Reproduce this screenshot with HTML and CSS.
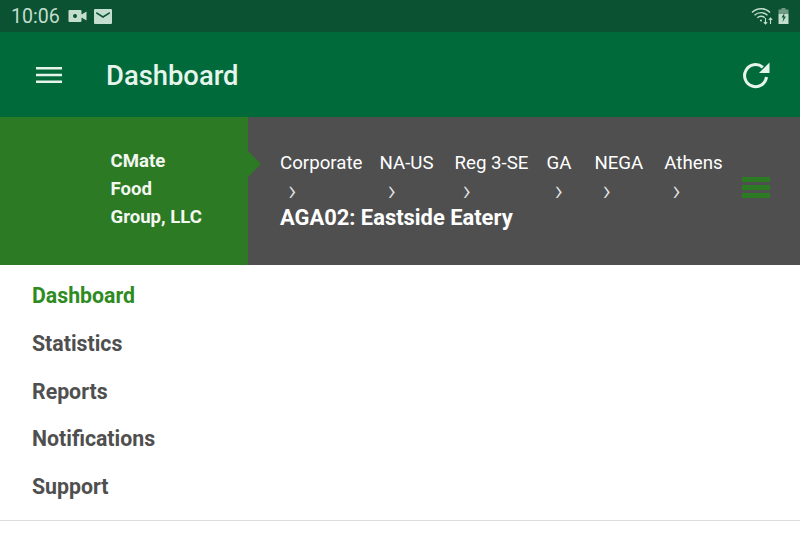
FILE: index.html
```html
<!DOCTYPE html>
<html lang="en">
<head>
    <meta charset="UTF-8">
    <meta name="viewport" content="width=device-width, initial-scale=1.0">
    <title>Dashboard</title>
    <link rel="stylesheet" href="styles.css">
</head>
<body>
    <div class="status-bar">
        <div class="status-left">
            <span class="clock">10:06</span>
            <svg class="status-icon" width="20" height="14" viewBox="0 0 20 14">
                <path fill="#c3ddcf" fill-rule="evenodd" d="M1.5 1h11a1 1 0 0 1 1 1v3.5l5-3v9l-5-3V12a1 1 0 0 1-1 1h-11a1 1 0 0 1-1-1V2a1 1 0 0 1 1-1zM7 5a2 2 0 1 0 0 4 2 2 0 0 0 0-4z"/>
            </svg>
            <svg class="status-icon" width="18" height="15" viewBox="0 0 18 15">
                <path fill="#c3ddcf" fill-rule="evenodd" d="M1 0h16a1 1 0 0 1 1 1v13a1 1 0 0 1-1 1H1a1 1 0 0 1-1-1V1a1 1 0 0 1 1-1zm1.500 3L2 4.400l7 4.600 7-4.600-.5-1.400L9 7z"/>
            </svg>
        </div>
        <div class="status-right">
            <svg width="22" height="18" viewBox="0 0 22 18" fill="none" stroke="#c3ddcf" stroke-width="1.4">
                <path d="M1 5.500c5-5 13-5 18 0"/>
                <path d="M3.500 8.200c3.600-3.400 9.400-3.400 13 0"/>
                <path d="M6.200 10.800c2.200-1.900 5.400-1.900 7.600 0"/>
                <circle cx="10" cy="13.400" r="1" fill="#c3ddcf" stroke="none"/>
                <path d="M14.500 11v6M12.800 15.200l1.700 1.800 1.700-1.800M19.500 17v-6M17.800 12.800l1.700-1.800 1.700 1.800" stroke-width="1.1"/>
            </svg>
            <svg width="11" height="16" viewBox="0 0 11 16">
                <path fill="#6f9a84" d="M3.500 0h4v1.500h3V6H.5V1.500h3z"/>
                <path fill="#c3ddcf" d="M.5 6h10v10H.5z"/>
                <path fill="#0f5a35" d="M6.500 5 3.500 9.500h2L4.500 14 8 8.500H6z"/>
            </svg>
        </div>
    </div>

    <header class="toolbar">
        <svg class="menu-icon" width="26" height="16" viewBox="0 0 26 16">
            <path fill="#e6f5ec" d="M0 0h26v2.400H0zM0 6.800h26v2.400H0zM0 13.600h26V16H0z"/>
        </svg>
        <h1 class="toolbar-title">Dashboard</h1>
        <svg class="refresh-icon" width="28" height="28" viewBox="0 0 28 28">
            <path fill="none" stroke="#e6f5ec" stroke-width="3" d="M24.500 16A11 11 0 1 1 20.800 6.300"/>
            <path fill="#e6f5ec" d="M27.500 1.500v10.500H17z"/>
        </svg>
    </header>

    <section class="banner">
        <div class="company">
            <span>CMate</span>
            <span>Food</span>
            <span>Group, LLC</span>
        </div>
        <div class="location">
            <ul class="crumbs">
                <li><span>Corporate</span><i>›</i></li>
                <li><span>NA-US</span><i>›</i></li>
                <li><span>Reg 3-SE</span><i>›</i></li>
                <li><span>GA</span><i>›</i></li>
                <li><span>NEGA</span><i>›</i></li>
                <li><span>Athens</span><i>›</i></li>
            </ul>
            <div class="site-name">AGA02: Eastside Eatery</div>
            <div class="site-menu"><b></b><b></b><b></b></div>
        </div>
    </section>

    <nav class="side-nav">
        <a class="active">Dashboard</a>
        <a>Statistics</a>
        <a>Reports</a>
        <a>Notifications</a>
        <a>Support</a>
    </nav>
</body>
</html>
```

FILE: styles.css
```css
* { box-sizing: border-box; }
html, body {
    height: 100%;
    overflow: hidden;
}
body {
    margin: 0;
    font-family: Roboto, 'Liberation Sans', sans-serif;
    background-color: white;
}
.status-bar {
    height: 32px;
    background-color: #0a5231;
    display: flex;
    align-items: center;
    justify-content: space-between;
    padding: 0 11px;
    color: #c3ddcf;
}
.status-left {
    display: flex;
    align-items: center;
    gap: 6px;
}
.clock { font-size: 19.6px; margin-right: 2px; }
.status-right {
    display: flex;
    align-items: center;
    gap: 5px;
}
.toolbar {
    height: 85px;
    background-color: #006a3b;
    display: flex;
    align-items: center;
    padding: 0 30px 0 36px;
}
.menu-icon { flex: none; }
.toolbar-title {
    margin: 2px 0 0 44px;
    flex: 1;
    font-size: 27.4px;
    font-weight: 500;
    color: #e6f5ec;
}
.banner {
    height: 148px;
    display: flex;
}
.company {
    width: 248px;
    background-color: #2c7a24;
    padding: 30px 0 0 110.5px;
    display: flex;
    flex-direction: column;
    color: #f2f7f1;
    font-size: 18.6px;
    font-weight: 700;
    line-height: 28px;
    position: relative;
    z-index: 1;
}
.company::after {
    content: "";
    position: absolute;
    right: -13px;
    top: 34px;
    border-top: 13px solid transparent;
    border-bottom: 13px solid transparent;
    border-left: 13px solid #2c7a24;
}
.location {
    flex: 1;
    background-color: #4f4f4f;
    padding: 33px 0 0 32px;
    color: white;
    position: relative;
}
.crumbs {
    list-style: none;
    margin: 0;
    padding: 0;
    display: flex;
}
.crumbs li {
    display: flex;
    flex-direction: column;
    margin-right: 18px;
    font-size: 18.7px;
    line-height: 26px;
}
.crumbs i {
    font-style: normal;
    padding-left: 8px;
    height: 28px;
    line-height: 29px;
    font-size: 29px;
    font-weight: 300;
    color: #e4e4e4;
}
.crumbs li:nth-child(1) { margin-right: 17px; }
.crumbs li:nth-child(2) { margin-right: 21px; }
.crumbs li:nth-child(4) { margin-right: 23px; }
.crumbs li:nth-child(5) { margin-right: 21px; }
.site-name {
    font-size: 21.9px;
    font-weight: 700;
    line-height: 27px;
}
.site-menu {
    position: absolute;
    left: 494px;
    top: 60px;
    width: 28px;
    display: flex;
    flex-direction: column;
    gap: 3px;
}
.site-menu b {
    height: 5px;
    background-color: #2c7a24;
}
.side-nav {
    height: 256px;
    border-bottom: 1px solid #dddddd;
    padding: 7px 0 0 32px;
    display: flex;
    flex-direction: column;
}
.side-nav a {
    height: 47.8px;
    line-height: 48px;
    font-size: 21.3px;
    font-weight: 700;
    color: #4f4f4f;
}
.side-nav a.active { color: #2e8b1f; }
```
